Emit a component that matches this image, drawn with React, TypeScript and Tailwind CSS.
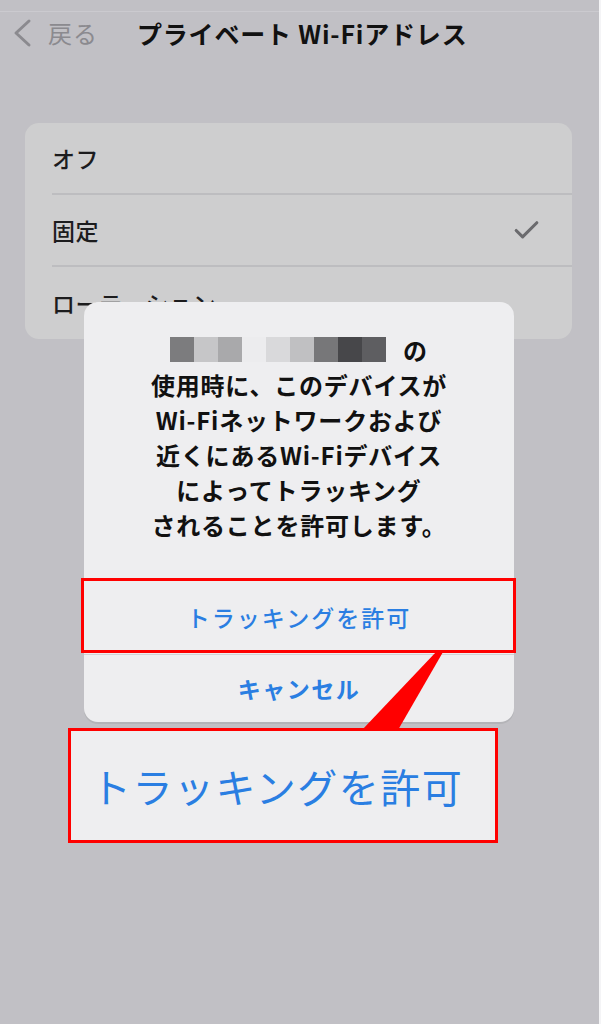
import { Check } from 'lucide-react'

const mosaic = ['#7c7c7e', '#c6c6c8', '#a9a9ab', '#ececee', '#d9d9db', '#c0c0c2', '#777779', '#47474a', '#5e5e61']

const options = [
  { label: 'オフ', checked: false },
  { label: '固定', checked: true },
  { label: 'ローテーション', checked: false },
]

const messageLines = [
  '使用時に、このデバイスが',
  'Wi-Fiネットワークおよび',
  '近くにあるWi-Fiデバイス',
  'によってトラッキング',
  'されることを許可します。',
]

export default function App() {
  return (
    <div
      className="relative w-[601px] h-[1024px] overflow-hidden bg-[#c1c0c5]"
      style={{ fontFamily: '"Noto Sans CJK JP", "Noto Sans", sans-serif' }}
    >
      {/* Nav bar */}
      <div className="h-[12px] border-b border-[#cbcacf]" />
      <div className="flex items-center h-[42px] pl-[13px]">
        <svg width="20" height="30" viewBox="0 0 20 30" className="text-[#8b8a8f]">
          <polyline points="16,3 3,15 16,27" fill="none" stroke="currentColor" strokeWidth="3" strokeLinecap="round" strokeLinejoin="round" />
        </svg>
        <span className="ml-[15px] text-[24px] leading-none text-[#8b8a8f] tracking-[1px]">戻る</span>
        <span className="ml-[39px] text-[25px] leading-none font-bold text-[#111] tracking-[0.8px]">
          プライベート Wi-Fiアドレス
        </span>
      </div>

      {/* Options list */}
      <div className="mt-[69px] mx-[25px] w-[547px] rounded-[14px] bg-[#cececf] overflow-hidden">
        {options.map((o, i) => (
          <div key={o.label} className="pl-[27px]">
            <div
              className={`flex items-center justify-between h-[72px] pr-[30px] ${
                i < options.length - 1 ? 'border-b-2 border-[#bdbdc0]' : ''
              }`}
            >
              <span className="text-[23px] font-medium text-[#1c1c1e] tracking-[0.5px]">{o.label}</span>
              {o.checked && <Check className="w-[31px] h-[31px] text-[#6b6b6e]" strokeWidth={2.4} />}
            </div>
          </div>
        ))}
      </div>

      {/* Alert */}
      <div className="absolute left-[84px] top-[302px] w-[430px] rounded-[14px] bg-[#eeeef0] shadow-[0_2px_0_#b4b4b8]">
        <div className="flex flex-col items-center pt-[30px] pb-[38px] text-[24px] leading-[35px] font-bold text-[#111] tracking-[0.8px]">
          <div className="flex items-center h-[35px]">
            <div className="flex">
              {mosaic.map((c, i) => (
                <div key={i} className="w-[24px] h-[25px]" style={{ background: c }} />
              ))}
            </div>
            <span className="ml-[17px]">の</span>
          </div>
          {messageLines.map((l) => (
            <div key={l}>{l}</div>
          ))}
        </div>
        <div className="flex items-center justify-center h-[74px] border-t border-[#d2d2d6] text-[23px] font-medium text-[#2a7ee2] tracking-[2px]">
          トラッキングを許可
        </div>
        <div className="flex items-center justify-center h-[68px] border-t border-[#d2d2d6] text-[23px] font-bold text-[#2a7ee2] tracking-[1.5px]">
          キャンセル
        </div>
      </div>

      {/* Highlight frame on the allow button */}
      <div className="absolute left-[81px] top-[578px] w-[435px] h-[75px] border-[3px] border-[#ff0000]" />

      {/* Callout pointer */}
      <svg className="absolute left-0 top-0" width="601" height="1024" viewBox="0 0 601 1024">
        <polygon points="436,652 443,652 398,730 362,730" fill="#ff0000" />
      </svg>

      {/* Zoomed callout */}
      <div className="absolute left-[68px] top-[728px] w-[430px] h-[115px] border-[3px] border-[#ff0000] bg-[#eeeef0] flex items-center pl-[20px]">
        <span className="text-[40px] leading-none text-[#2a7ee2] tracking-[1.5px]">トラッキングを許可</span>
      </div>

      <div className="absolute right-0 top-0 w-[2px] h-full bg-[#f4f4f6]" />
    </div>
  )
}
